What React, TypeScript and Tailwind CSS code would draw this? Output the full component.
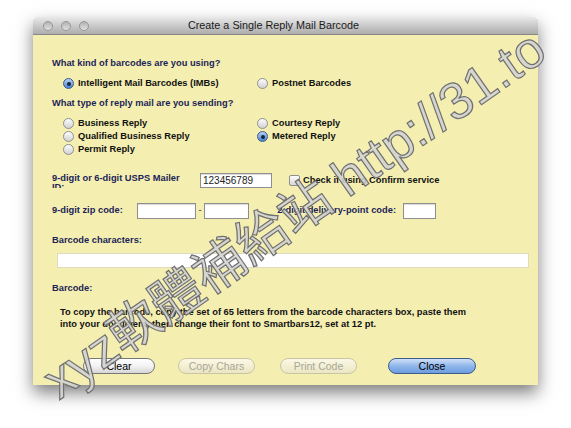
import clsx from "clsx";

function Radio({ checked }: { checked?: boolean }) {
  return (
    <span
      className={clsx(
        "flex h-[11px] w-[11px] shrink-0 items-center justify-center rounded-full border",
        checked
          ? "border-[#3b5a8c] bg-linear-to-b from-[#b8d2f3] to-[#4a82d0]"
          : "border-[#8f8f8f] bg-linear-to-b from-[#fdfdfd] to-[#d2d2d2]"
      )}
    >
      {checked && <span className="h-[4px] w-[4px] rounded-full bg-[#16243d]" />}
    </span>
  );
}

function Option({ label, checked }: { label: string; checked?: boolean }) {
  return (
    <div className="flex h-[13px] items-center gap-[4px] text-[#111]">
      <Radio checked={checked} />
      <span>{label}</span>
    </div>
  );
}

function Field({ className }: { className: string }) {
  return (
    <div
      className={clsx(
        "border border-[#8e8e8e] bg-white shadow-[inset_0_1px_1px_rgba(0,0,0,0.15)]",
        className
      )}
    />
  );
}

function Light() {
  return (
    <span className="h-[10px] w-[10px] rounded-full border border-[#979797] bg-linear-to-b from-[#b3b3b3] to-[#e0e0e0]" />
  );
}

export default function App() {
  return (
    <div className="relative h-[428px] w-[571px] overflow-hidden bg-white pl-[33px] pt-[17px] font-['Liberation_Sans',Arial,sans-serif]">
      <div className="w-[505px] shadow-[0_8px_16px_rgba(0,0,0,0.5)]">
        {/* title bar */}
        <div className="grid h-[18px] grid-cols-[1fr_auto_1fr] items-center rounded-t-[4px] border-b border-[#878787] bg-linear-to-b from-[#e9e9e9] to-[#adadad] pr-[24px]">
          <div className="flex items-center gap-[8px] pl-[10px]">
            <Light />
            <Light />
            <Light />
          </div>
          <div className="text-[10.8px] leading-none text-[#1a1a1a]">
            Create a Single Reply Mail Barcode
          </div>
          <div />
        </div>

        {/* body */}
        <div className="bg-[#f4efb1] pb-[11px] pl-[19px] pr-[8px] pt-[22px] text-[9.3px] font-bold">
          <div className="h-[12px] leading-[12px] text-[#1c2457]">
            What kind of barcodes are you using?
          </div>
          <div className="mt-[8px] grid grid-cols-[194px_1fr] pl-[11px]">
            <Option label="Intelligent Mail Barcodes (IMBs)" checked />
            <Option label="Postnet Barcodes" />
          </div>

          <div className="mt-[7px] h-[12px] leading-[12px] text-[#1c2457]">
            What type of reply mail are you sending?
          </div>
          <div className="mt-[8px] grid grid-cols-[194px_1fr] pl-[11px]">
            <Option label="Business Reply" />
            <Option label="Courtesy Reply" />
            <Option label="Qualified Business Reply" />
            <Option label="Metered Reply" checked />
            <Option label="Permit Reply" />
          </div>

          {/* mailer id */}
          <div className="mt-[17px] flex h-[15px] items-start">
            <div className="w-[148px]">
              <div className="h-[15px] w-[132px] overflow-hidden pt-[1px] leading-[9px] text-[#1c2457]">
                9-digit or 6-digit USPS Mailer ID:
              </div>
            </div>
            <div className="flex h-[15px] w-[72px] items-center border border-[#8e8e8e] bg-white px-[2px] text-[10px] font-normal text-[#222] shadow-[inset_0_1px_1px_rgba(0,0,0,0.15)]">
              123456789
            </div>
            <div className="ml-[17px] flex h-[15px] items-center gap-[3px] text-[#111]">
              <span className="h-[11px] w-[11px] rounded-[2px] border border-[#8f8f8f] bg-linear-to-b from-white to-[#d6d6d6]" />
              <span>Check if using Confirm service</span>
            </div>
          </div>

          {/* zip */}
          <div className="mt-[15px] flex h-[16px] items-center text-[#1c2457]">
            <span className="w-[85px]">9-digit zip code:</span>
            <Field className="h-[16px] w-[59px]" />
            <span className="w-[8px] text-center font-normal">-</span>
            <Field className="h-[16px] w-[45px]" />
            <span className="w-[147px] text-right">2-digit delivery-point code:</span>
            <Field className="ml-[7px] h-[16px] w-[33px]" />
          </div>

          <div className="mt-[15px] h-[12px] leading-[12px] text-[#1c2457]">
            Barcode characters:
          </div>
          <div className="ml-[5px] mt-[7px] h-[15px] w-[472px] border border-[#dedbc0] bg-white" />

          <div className="mt-[14px] h-[12px] leading-[12px] text-[#1c2457]">Barcode:</div>
          <p className="mt-[12px] pl-[8px] leading-[12px] text-[#111]">
            To copy the barcode, copy the set of 65 letters from the barcode characters box, paste them
            <br />
            into your document, then change their font to Smartbars12, set at 12 pt.
          </p>

          {/* buttons */}
          <div className="mt-[28px] flex h-[16px] text-[10.5px] font-normal">
            <button className="ml-[31px] h-[16px] w-[72px] rounded-full border border-[#777] bg-linear-to-b from-white via-[#f3f3f3] to-[#d6d6d6] leading-none text-black">
              Clear
            </button>
            <button className="ml-[23px] h-[16px] w-[77px] rounded-full border border-[#c9c5a2] bg-linear-to-b from-[#fbf9e6] to-[#ebe6c2] leading-none text-[#a9a69a]">
              Copy Chars
            </button>
            <button className="ml-[25px] h-[16px] w-[77px] rounded-full border border-[#c9c5a2] bg-linear-to-b from-[#fbf9e6] to-[#ebe6c2] leading-none text-[#a9a69a]">
              Print Code
            </button>
            <button className="ml-[31px] h-[16px] w-[88px] rounded-full border border-[#3d5c8c] bg-linear-to-b from-[#d0e1f8] via-[#8fb6ea] to-[#6c9de0] leading-none text-black">
              Close
            </button>
          </div>
        </div>
      </div>

      {/* watermark */}
      <div className="pointer-events-none absolute left-[294px] top-[214px] -translate-x-1/2 -translate-y-1/2 -rotate-[35deg] whitespace-nowrap font-['Liberation_Sans','Noto_Sans_CJK_TC',sans-serif] text-[52px] leading-none text-[rgba(210,210,210,0.88)] [-webkit-text-stroke:1.2px_#707070]">
        xyz軟體補給站 http://31.to
      </div>
    </div>
  );
}
